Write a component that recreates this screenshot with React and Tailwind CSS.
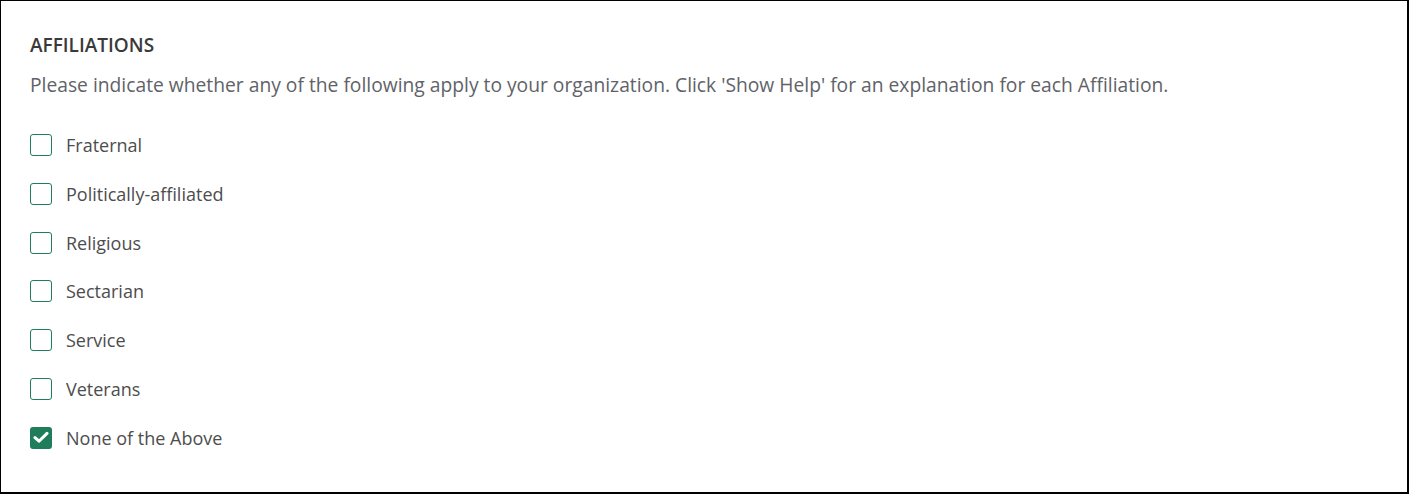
import React from "react";

const items = [
  { label: "Fraternal", checked: false },
  { label: "Politically-affiliated", checked: false },
  { label: "Religious", checked: false },
  { label: "Sectarian", checked: false },
  { label: "Service", checked: false },
  { label: "Veterans", checked: false },
  { label: "None of the Above", checked: true },
];

function Box({ checked }) {
  if (checked) {
    return (
      <span className="flex h-[22px] w-[22px] items-center justify-center rounded-[3px] bg-[#1f7d5b]">
        <svg width="16" height="13" viewBox="0 0 16 13" fill="none">
          <path d="M2 6.6 L6 10.2 L14 2.4" stroke="white" strokeWidth="3" strokeLinecap="round" strokeLinejoin="round" />
        </svg>
      </span>
    );
  }
  return <span className="block h-[22px] w-[22px] rounded-[3px] border border-[#1f7d5b] bg-white" />;
}

export default function App() {
  return (
    <div
      className="h-[494px] w-[1409px] border-t border-l border-r-2 border-b-2 border-black bg-white pl-[29px] pt-[30px] text-[#555]"
      style={{ fontFamily: '"Open Sans", sans-serif' }}
    >
      <h2 className="text-[19px] font-semibold leading-[28px] text-[#3a3a3a]">AFFILIATIONS</h2>
      <p className="mt-[12px] text-[19.25px] leading-[28px] text-[#5f6368]">
        Please indicate whether any of the following apply to your organization. Click 'Show Help' for an explanation for each Affiliation.
      </p>
      <div className="mt-[34px] flex flex-col gap-[24.8px]">
        {items.map((it) => (
          <label key={it.label} className="flex h-[24px] items-center gap-[14px]">
            <Box checked={it.checked} />
            <span className="text-[18px] leading-[24px] text-[#4d4d4d]">{it.label}</span>
          </label>
        ))}
      </div>
    </div>
  );
}
